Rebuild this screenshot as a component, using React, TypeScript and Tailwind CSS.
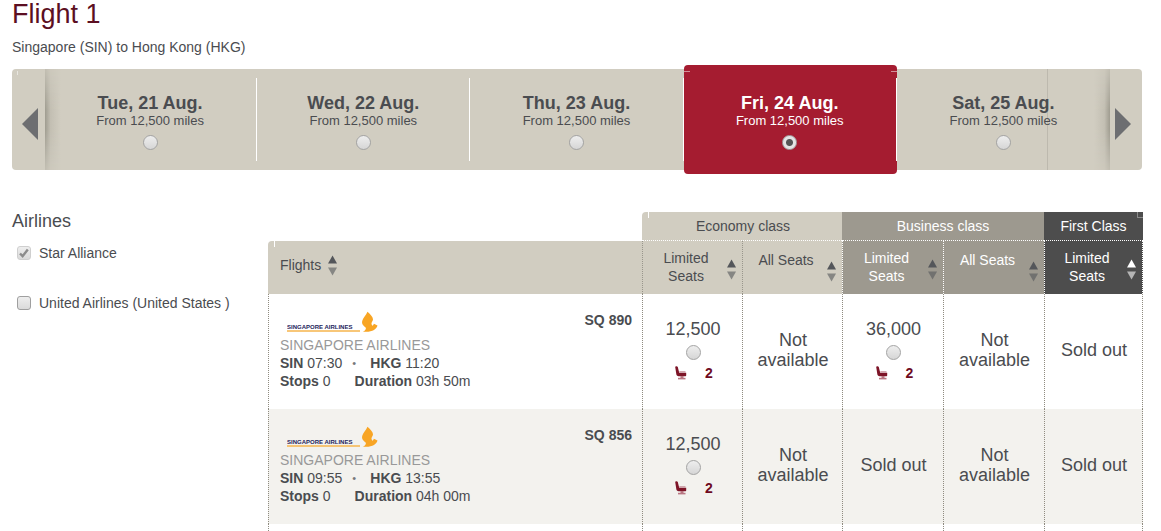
import { useState } from "react";
import clsx from "clsx";

const dates = [
    { id: "21", label: "Tue, 21 Aug.", price: "From 12,500 miles" },
    { id: "22", label: "Wed, 22 Aug.", price: "From 12,500 miles" },
    { id: "23", label: "Thu, 23 Aug.", price: "From 12,500 miles" },
    { id: "24", label: "Fri, 24 Aug.", price: "From 12,500 miles" },
    { id: "25", label: "Sat, 25 Aug.", price: "From 12,500 miles" },
];

type Fare = { miles?: string; seats?: number; status?: string };

type Flight = {
    code: string;
    depart: string;
    arrive: string;
    duration: string;
    fares: Fare[];
};

const flights: Flight[] = [
    {
        code: "SQ 890",
        depart: "07:30",
        arrive: "11:20",
        duration: "03h 50m",
        fares: [
            { miles: "12,500", seats: 2 },
            { status: "Not available" },
            { miles: "36,000", seats: 2 },
            { status: "Not available" },
            { status: "Sold out" },
        ],
    },
    {
        code: "SQ 856",
        depart: "09:55",
        arrive: "13:55",
        duration: "04h 00m",
        fares: [
            { miles: "12,500", seats: 2 },
            { status: "Not available" },
            { status: "Sold out" },
            { status: "Not available" },
            { status: "Sold out" },
        ],
    },
];

const fareColumns = [
    { name: "Limited Seats", style: "bg-[#d1cdc1] border-[#99968c]", tone: "dark" },
    { name: "All Seats", style: "bg-[#d1cdc1] border-[#99968c]", tone: "dark" },
    { name: "Limited Seats", style: "bg-[#9d998f] border-white text-white", tone: "dark" },
    { name: "All Seats", style: "bg-[#9d998f] border-white text-white", tone: "dark" },
    { name: "Limited Seats", style: "bg-[#4d4d4d] border-white border-r text-white", tone: "light" },
];

const radioStyle =
    "block size-[15px] shrink-0 appearance-none rounded-full border border-[#a3a3a3] bg-linear-to-b from-[#eeeeee] to-[#d6d6d6] checked:bg-[radial-gradient(circle,#555555_0_3px,#e4e4e4_4px)]";

const shadeStyle =
    "absolute inset-y-0 w-4 from-[#9f9c90] via-[#c3bfb3] via-35% to-[#d1cdc1] [mask-image:linear-gradient(rgba(0,0,0,0.3),#000_40%,#000_60%,rgba(0,0,0,0.3))]";

function SortIcon({ tone, className }: { tone: string; className?: string }) {
    const light = tone === "light";
    return (
        <svg viewBox="0 0 9 21" className={clsx("h-[21px] w-[9px] shrink-0", className)} aria-hidden="true">
            <path d="M4.5 0.5 9 8.5H0z" fill={light ? "#ffffff" : "#54565a"} />
            <path d="M0 12.5h9l-4.5 8z" fill={light ? "#b5b5b5" : "#54565a"} fillOpacity={light ? 1 : 0.6} />
        </svg>
    );
}

function SeatIcon() {
    return (
        <svg viewBox="0 0 12 14" className="h-[14px] w-3" aria-hidden="true">
            <path d="M0.200 1C.3.100 2.400 0 2.800 1l1.400 5.800h7v2.700c0 .4-.3.700-.7.700H3.600C2.200 10.200 1.500 9.400 1.300 8z" fill="#7d1427" />
            <path d="M4.200 5.200h6.300v1.400H4.600z" fill="#c48d97" />
            <path d="M5.500 10h3v2h-3z" fill="#b87682" />
            <path d="M3 11.800h7.500v1.600H3z" fill="#b87682" />
        </svg>
    );
}

function AirlineLogo() {
    return (
        <svg viewBox="0 0 92 22" className="h-[22px] w-[92px]" role="img" aria-label="Singapore Airlines">
            <text x="0" y="18" fontSize="6" fontWeight="700" fill="#23235b" fontFamily="'Liberation Sans', Arial, sans-serif">
                SINGAPORE AIRLINES
            </text>
            <path d="M0 19.300h73v1.500H0z" fill="#f6b54c" />
            <path
                d="M80.500 0.800c2.600 2.200 5.300 5 5.500 7.400.1 1.500-1.300 2.700-1.500 4.100-.1 1 .4 1.800 1 2.500.6-.5 1-1.300 1.400-2.100l3.600 1.700c-.4 1.800-1.800 3.300-3.500 4.600-2.300 1.300-5.100 1.900-8.400 1.800h-2.900c1.600-.8 3-2 3.200-3.400.1-1.400-1.600-1.700-2.700-3.200-.8-1.100-1.500-2.500-1-4.300.7-2.800 3.900-5.900 5.300-9.100z"
                fill="#f8a524"
            />
        </svg>
    );
}

function DateBar() {
    const [selected, setSelected] = useState("24");

    return (
        <div className="relative mt-[13px] mr-px flex rounded bg-[#d1cdc1]">
            <span className="absolute top-0.5 left-[5px] h-1 w-px bg-white/50" />
            <button type="button" aria-label="Previous dates" className="flex w-8 items-center justify-center pt-2 pl-1">
                <svg viewBox="0 0 16 32" className="h-8 w-4" aria-hidden="true">
                    <path d="M16 0v32L0 16z" fill="#6d6e71" />
                </svg>
            </button>
            <ul className="flex flex-1">
                {dates.map((date, i) => {
                    const active = date.id === selected;
                    const last = i === dates.length - 1;
                    return (
                        <li
                            key={date.id}
                            className={clsx(
                                "relative flex-1",
                                active ? "-my-1 rounded bg-[#a51c30] py-[13px] text-white" : "py-[9px]"
                            )}
                        >
                            {i === 0 && <span className={clsx(shadeStyle, "left-px bg-linear-to-r")} />}
                            {last && (
                                <>
                                    <span className={clsx(shadeStyle, "right-0 bg-linear-to-l")} />
                                    <span className="absolute inset-y-0 right-[62px] w-px bg-[#bdb9ae]" />
                                </>
                            )}
                            {active && (
                                <>
                                    <span className="absolute top-1.5 left-0 h-px w-1.5 bg-white/50" />
                                    <span className="absolute top-1.5 right-0 h-px w-1.5 bg-white/50" />
                                </>
                            )}
                            <label
                                className={clsx(
                                    "relative flex h-full flex-col items-center pt-[15px] pb-[11px]",
                                    !last && "border-r border-white"
                                )}
                            >
                                <span className="text-lg leading-5 font-bold">{date.label}</span>
                                <span className="text-[13px] leading-4">{date.price}</span>
                                <input
                                    type="radio"
                                    name="date"
                                    value={date.id}
                                    checked={active}
                                    onChange={() => setSelected(date.id)}
                                    className={clsx(radioStyle, "mt-1.5")}
                                />
                            </label>
                        </li>
                    );
                })}
            </ul>
            <button type="button" aria-label="Next dates" className="flex w-8 items-center justify-center pt-2 pr-1.5">
                <svg viewBox="0 0 16 32" className="h-8 w-4" aria-hidden="true">
                    <path d="M0 0v32l16-16z" fill="#6d6e71" />
                </svg>
            </button>
        </div>
    );
}

function AirlineFilter({ label, checked, disabled }: { label: string; checked?: boolean; disabled?: boolean }) {
    return (
        <label className="flex items-center gap-2 pl-[5px]">
            <span className="relative">
                <input
                    type="checkbox"
                    defaultChecked={checked}
                    disabled={disabled}
                    className={clsx(
                        "peer block size-[14px] appearance-none rounded-[3px] border bg-linear-to-b from-[#eeeeee] to-[#dadada]",
                        disabled ? "border-[#cfcfcf]" : "border-[#9f9f9f]"
                    )}
                />
                <svg viewBox="0 0 14 14" className="pointer-events-none absolute inset-0 hidden size-[14px] peer-checked:block" aria-hidden="true">
                    <path d="M3 7.500l2.600 2.700L10.800 3.500" fill="none" stroke="#8c8c8c" strokeWidth="2.400" />
                </svg>
            </span>
            <span>{label}</span>
        </label>
    );
}

function FareCell({ fare, name, label }: { fare: Fare; name: string; label: string }) {
    if (fare.status) {
        return <p className="px-3 text-lg leading-5">{fare.status}</p>;
    }
    return (
        <label className="flex flex-col items-center">
            <span className="text-lg leading-5">{fare.miles}</span>
            <input type="radio" name={name} aria-label={label} className={clsx(radioStyle, "mt-1.5")} />
            <span className="mt-1 flex items-center gap-[18px] pl-0.5 font-bold text-[#6e0a1e]">
                <SeatIcon />
                {fare.seats}
            </span>
        </label>
    );
}

function FlightTable() {
    return (
        <table className="w-full table-fixed border-separate border-spacing-0 text-center">
            <colgroup>
                <col />
                <col className="w-[100px]" />
                <col className="w-[100px]" />
                <col className="w-[101px]" />
                <col className="w-[101px]" />
                <col className="w-[99px]" />
            </colgroup>
            <thead>
                <tr className="h-[29px]">
                    <td />
                    <th colSpan={2} className="relative rounded-tl border-b border-dotted border-white bg-[#d1cdc1] p-0 pl-0.5 font-normal">
                        <span className="absolute top-0 left-1.5 h-1.5 w-px bg-white" />
                        Economy class
                    </th>
                    <th colSpan={2} className="border-b border-dotted border-white bg-[#9d998f] p-0 font-normal text-white">
                        Business class
                    </th>
                    <th className="relative border-b border-dotted border-white bg-[#4d4d4d] p-0 font-normal text-white">
                        <span className="absolute top-0 right-0 size-1.5 border-b border-l border-[#8a8a8a]" />
                        First Class
                    </th>
                </tr>
                <tr>
                    <th className="relative rounded-tl bg-[#d1cdc1] p-0 pb-1.5 font-normal">
                        <span className="absolute top-0 left-1.5 h-1.5 w-px bg-white" />
                        <button type="button" className="flex items-center gap-[7px] pl-3">
                            Flights
                            <SortIcon tone="dark" className="mt-0.5" />
                        </button>
                    </th>
                    {fareColumns.map((col, i) => (
                        <th key={i} className={clsx("border-l border-dotted p-0 align-top font-normal", col.style)}>
                            <button
                                type="button"
                                className={clsx(
                                    "flex w-full items-start pr-1.5 pb-[9px] pl-0.5",
                                    col.name === "All Seats" ? "pt-2.5" : "pt-2"
                                )}
                            >
                                <span className={clsx("flex-1", col.name !== "All Seats" && "px-4")}>{col.name}</span>
                                <SortIcon tone={col.tone} className="mt-2.5" />
                            </button>
                        </th>
                    ))}
                </tr>
            </thead>
            <tbody>
                {flights.map((flight) => (
                    <tr key={flight.code} className="h-[115px] even:bg-[#f3f2ee]">
                        <td className="border-l border-dotted border-[#8f8b80] p-0 align-top">
                            <div className="flex justify-between pt-[17px] pr-2.5 pl-[11px] text-left">
                                <div>
                                    <div className="pb-[3px] pl-[7px]">
                                        <AirlineLogo />
                                    </div>
                                    <p className="text-[#999999]">SINGAPORE AIRLINES</p>
                                    <p className="flex">
                                        <span><b>SIN</b> {flight.depart}</span>
                                        <span className="w-7 pr-1 text-center text-[11px] text-[#77787b]">•</span>
                                        <span><b>HKG</b> {flight.arrive}</span>
                                    </p>
                                    <p className="flex gap-6">
                                        <span><b>Stops</b> 0</span>
                                        <span><b>Duration</b> {flight.duration}</span>
                                    </p>
                                </div>
                                <b>{flight.code}</b>
                            </div>
                        </td>
                        {flight.fares.map((fare, i) => (
                            <td key={i} className="border-l border-dotted border-[#8f8b80] p-0 pb-[3px] pl-px last:border-r">
                                <FareCell fare={fare} name="fare" label={`${flight.code} for ${fare.miles} miles`} />
                            </td>
                        ))}
                    </tr>
                ))}
                <tr className="h-[7px]">
                    {[0, 1, 2, 3, 4, 5].map((i) => (
                        <td key={i} className="border-l border-dotted border-[#8f8b80] p-0 last:border-r" />
                    ))}
                </tr>
            </tbody>
        </table>
    );
}

export default function App() {
    return (
        <main className="pr-[18px] pl-3 font-['Liberation_Sans',Arial,sans-serif] text-sm leading-[18px] text-[#4a4c50]">
            <h1 className="text-[27px] leading-7 text-[#5c0f22]">Flight 1</h1>
            <p className="mt-2.5">Singapore (SIN) to Hong Kong (HKG)</p>
            <DateBar />
            <div className="mt-[42px] flex">
                <aside className="w-64 shrink-0">
                    <h2 className="text-lg leading-[18px]">Airlines</h2>
                    <div className="mt-3.5 flex flex-col gap-8">
                        <AirlineFilter label="Star Alliance" checked disabled />
                        <AirlineFilter label="United Airlines (United States )" />
                    </div>
                </aside>
                <section className="min-w-0 flex-1">
                    <FlightTable />
                </section>
            </div>
        </main>
    );
}
